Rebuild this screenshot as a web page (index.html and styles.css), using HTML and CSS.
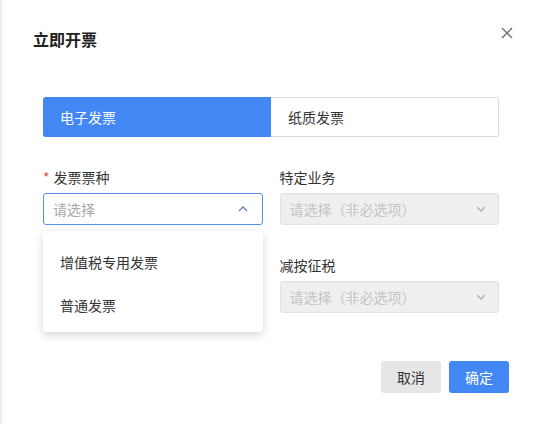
FILE: index.html
```html
<!DOCTYPE html>
<html lang="zh-CN">

<head>
    <meta charset="UTF-8">
    <meta name="viewport" content="width=device-width, initial-scale=1.0">
    <title>立即开票</title>
    <link rel="stylesheet" href="styles.css">
</head>

<body>
    <div class="dialog">
        <!-- Header -->
        <div class="dialog-header">
            <h2>立即开票</h2>
            <span class="close">
                <svg width="12" height="12" viewBox="0 0 12 12"><path d="M1 1 L11 11 M11 1 L1 11" stroke="#757575" stroke-width="1.5" fill="none"/></svg>
            </span>
        </div>

        <div class="dialog-body">
            <!-- Invoice type tabs -->
            <div class="tabs">
                <div class="tab active">电子发票</div>
                <div class="tab">纸质发票</div>
            </div>

            <!-- Form -->
            <div class="form-grid">
                <div class="field">
                    <label><span class="required">*</span>发票票种</label>
                    <div class="select focused">
                        <span class="placeholder">请选择</span>
                        <svg class="arrow" width="10" height="6" viewBox="0 0 10 6"><path d="M1 5 L5 1 L9 5" stroke="#6784b8" stroke-width="1.4" fill="none"/></svg>
                    </div>
                    <ul class="dropdown">
                        <li>增值税专用发票</li>
                        <li>普通发票</li>
                    </ul>
                </div>
                <div class="field">
                    <label>特定业务</label>
                    <div class="select disabled">
                        <span class="placeholder">请选择（非必选项）</span>
                        <svg class="arrow" width="10" height="6" viewBox="0 0 10 6"><path d="M1 1 L5 5 L9 1" stroke="#b0b0b0" stroke-width="1.3" fill="none"/></svg>
                    </div>
                </div>
                <div class="field"></div>
                <div class="field">
                    <label>减按征税</label>
                    <div class="select disabled">
                        <span class="placeholder">请选择（非必选项）</span>
                        <svg class="arrow" width="10" height="6" viewBox="0 0 10 6"><path d="M1 1 L5 5 L9 1" stroke="#b0b0b0" stroke-width="1.3" fill="none"/></svg>
                    </div>
                </div>
            </div>
        </div>

        <!-- Footer buttons -->
        <div class="dialog-footer">
            <button class="btn btn-cancel">取消</button>
            <button class="btn btn-primary">确定</button>
        </div>
    </div>
</body>

</html>
```

FILE: styles.css
```css
* {
    margin: 0;
    padding: 0;
    box-sizing: border-box;
    font-family: "Noto Sans CJK SC", "Noto Sans", sans-serif;
}

body {
    background-color: #fff;
    color: #333;
    width: 541px;
    height: 424px;
    overflow: hidden;
}

.dialog {
    height: 424px;
    border-left: 2px solid #eeeeee;
    background-color: #fff;
}

.dialog-header {
    display: flex;
    justify-content: space-between;
    align-items: center;
    padding: 27px 28px 0 31px;
    height: 50px;
}

.dialog-header h2 {
    font-size: 16px;
    font-weight: 700;
    color: #222;
    line-height: 22px;
}

.close {
    display: flex;
    margin-top: -12px;
}

.dialog-body {
    padding: 47px 42px 0 41px;
}

.tabs {
    display: flex;
    height: 40px;
}

.tab {
    flex: 1;
    display: flex;
    align-items: center;
    padding-left: 17px;
    font-size: 14px;
    color: #333;
    border: 1px solid #dcdcdc;
    border-left: none;
    border-radius: 0 2px 2px 0;
}

.tab.active {
    background-color: #4387f4;
    border-color: #4387f4;
    color: #fff;
    border-radius: 3px 0 0 3px;
}

.form-grid {
    display: grid;
    grid-template-columns: 1fr 1fr;
    column-gap: 17px;
    row-gap: 30px;
    margin-top: 30px;
}

.field {
    position: relative;
}

.field label {
    display: block;
    font-size: 14px;
    line-height: 20px;
    color: #333;
    margin-bottom: 6px;
}

.required {
    color: #e05050;
    margin-right: 4px;
}

.select {
    display: flex;
    justify-content: space-between;
    align-items: center;
    height: 32px;
    padding: 0 12px 0 9px;
    border: 1px solid #dcdcdc;
    border-radius: 3px;
    font-size: 14px;
}

.select .placeholder {
    color: #a8a8a8;
}

.select.focused {
    border-color: #5b8fe6;
}

.select.focused .arrow {
    margin-right: 2px;
}

.select.disabled {
    background-color: #efefef;
    border-color: #e2e2e2;
}

.select.disabled .placeholder {
    color: #c4c4c4;
}

.dropdown {
    position: absolute;
    top: 64px;
    left: 0;
    right: 0;
    list-style: none;
    background-color: #fff;
    padding: 10px 0 5px;
    border-radius: 3px;
    box-shadow: 0 3px 10px rgba(0, 0, 0, 0.16);
    z-index: 10;
}

.dropdown li {
    height: 43px;
    line-height: 43px;
    padding-left: 17px;
    font-size: 14px;
    color: #333;
}

.dialog-footer {
    display: flex;
    justify-content: flex-end;
    gap: 8px;
    padding: 48px 32px 0 0;
}

.btn {
    width: 60px;
    height: 32px;
    border: none;
    border-radius: 3px;
    font-size: 14px;
    cursor: pointer;
}

.btn-cancel {
    background-color: #e6e6e6;
    color: #333;
}

.btn-primary {
    background-color: #4387f4;
    color: #fff;
}
```
